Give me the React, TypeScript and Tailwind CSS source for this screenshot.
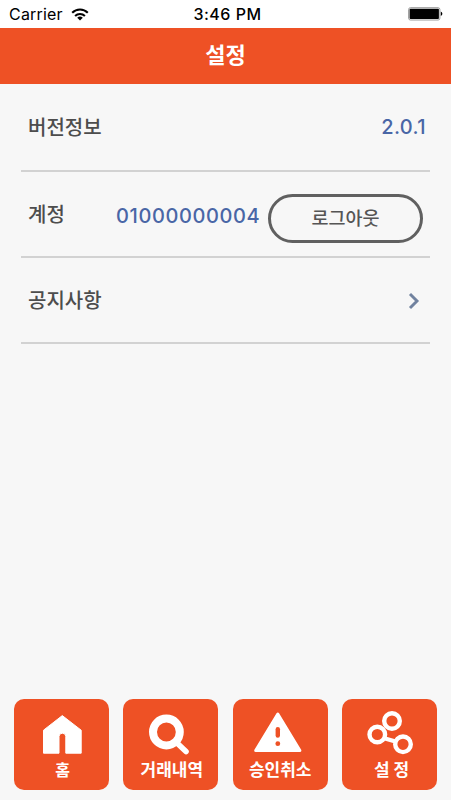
import type { ReactNode } from 'react';

interface TabProps {
  label: string;
  labelClass?: string;
  children: ReactNode;
}

const Tab = ({ label, labelClass = 'text-[17px]', children }: TabProps) => (
  <button className="flex h-[91px] w-[95px] flex-col items-center overflow-hidden rounded-[10px] bg-[#ee5125] text-white">
    <svg viewBox="0 0 95 60" className="h-[60px] w-[95px] shrink-0" fill="none">
      {children}
    </svg>
    <span className={`leading-[20px] font-bold whitespace-nowrap ${labelClass}`}>{label}</span>
  </button>
);

const StatusBar = () => (
  <div className="grid h-[28px] grid-cols-3 items-center bg-white pl-[9px] pr-[8px] font-['Inter',sans-serif] text-[16px] text-black">
    <div className="flex items-center gap-[8px]">
      <span className="tracking-[0.2px]">Carrier</span>
      <svg viewBox="0 0 18 13" className="h-[13px] w-[18px]" fill="none" stroke="currentColor" strokeWidth="2.1">
        <path d="M1.2 4.8a11 11 0 0 1 15.6 0" />
        <path d="M4.1 8a7 7 0 0 1 9.8 0" />
        <path d="M9 12.6 6.2 9.8a4 4 0 0 1 5.6 0Z" fill="currentColor" stroke="none" />
      </svg>
    </div>
    <span className="pl-[3px] text-center font-medium tracking-[0.5px] whitespace-nowrap">3:46 PM</span>
    <svg viewBox="0 0 35 14" className="h-[14px] w-[35px] justify-self-end">
      <rect x="0.6" y="0.7" width="31.3" height="12.3" rx="1.8" fill="white" stroke="#999" strokeWidth="1" />
      <rect x="1.6" y="1.7" width="29.3" height="10.3" rx="0.8" fill="black" />
      <path d="M32.8 4.6q1.6.7 1.6 2.2t-1.6 2.2Z" fill="black" />
    </svg>
  </div>
);

const App = () => {
  return (
    <div className="flex h-[800px] w-[451px] flex-col bg-[#f7f7f7] font-['Noto_Sans_CJK_KR',sans-serif]">
      <StatusBar />
      <header className="flex h-[56px] items-center justify-center bg-[#ee5125] pb-[6px]">
        <h1 className="text-[22px] leading-[30px] font-bold text-white">설정</h1>
      </header>

      <main className="mx-[21px] flex-1 pt-px text-[20px] font-medium text-[#4d4d4d]">
        <div className="flex h-[87px] items-start justify-between border-b-2 border-[#d2d2d2] pt-[27px] pl-[7px] pr-[4px]">
          <span className="leading-[30px]">버전정보</span>
          <span className="font-['Inter',sans-serif] text-[20px] leading-[30px] tracking-[0.4px] text-[#4966a6]">2.0.1</span>
        </div>
        <div className="flex h-[86px] items-start border-b-2 border-[#d2d2d2] pl-[7px]">
          <span className="w-[88px] pt-[27px] leading-[30px]">계정</span>
          <span className="w-[152px] pt-[29px] font-['Inter',sans-serif] text-[20px] leading-[30px] tracking-[0.6px] text-[#4966a6]">01000000004</span>
          <button className="mt-[22px] h-[49px] w-[155px] rounded-full border-[3px] border-[#606060] pb-[2px] text-[18.5px] font-medium text-[#555]">로그아웃</button>
        </div>
        <div className="flex h-[86px] items-start justify-between border-b-2 border-[#d2d2d2] pt-[27px] pl-[7px] pr-[10px]">
          <span className="leading-[30px]">공지사항</span>
          <svg viewBox="0 0 12 18" className="mt-[7px] h-[18px] w-[12px]" fill="none" stroke="#71829f" strokeWidth="2.9">
            <path d="m2 2 7 7-7 7" />
          </svg>
        </div>
      </main>

      <nav className="flex justify-between px-[14px] pb-[10px]">
        <Tab label="홈" labelClass="pl-[2px] text-[16px]">
          <path
            d="M48.3 16.6 67.2 31.2V54.2H51.8V37.6a3.4 3.4 0 0 0-6.8 0V54.2H29.5V31.2Z"
            fill="white"
            stroke="white"
            strokeLinejoin="round"
          />
        </Tab>
        <Tab label="거래내역" labelClass="pl-[2px] text-[17px]">
          <circle cx="43.4" cy="33" r="13.4" stroke="white" strokeWidth="8" />
          <path d="m54 44 9 8.5" stroke="white" strokeWidth="5.6" strokeLinecap="round" />
        </Tab>
        <Tab label="승인취소">
          <path d="M44.8 15 66.9 51.5H22.7Z" fill="white" stroke="white" strokeWidth="3" strokeLinejoin="round" />
          <path d="M44.8 30.2v6.4" stroke="#ee5125" strokeWidth="4.4" strokeLinecap="round" />
          <circle cx="44.8" cy="44.7" r="2.4" fill="#ee5125" />
        </Tab>
        <Tab label="설 정" labelClass="pl-[4px] text-[17px]">
          <g stroke="white" strokeWidth="4.4">
            <circle cx="50" cy="22" r="7.8" />
            <circle cx="35.3" cy="35.5" r="7.8" />
            <circle cx="61" cy="45.3" r="7.8" />
            <path d="m43 39.5 10.5 3" />
          </g>
        </Tab>
      </nav>
    </div>
  );
};

export default App;
